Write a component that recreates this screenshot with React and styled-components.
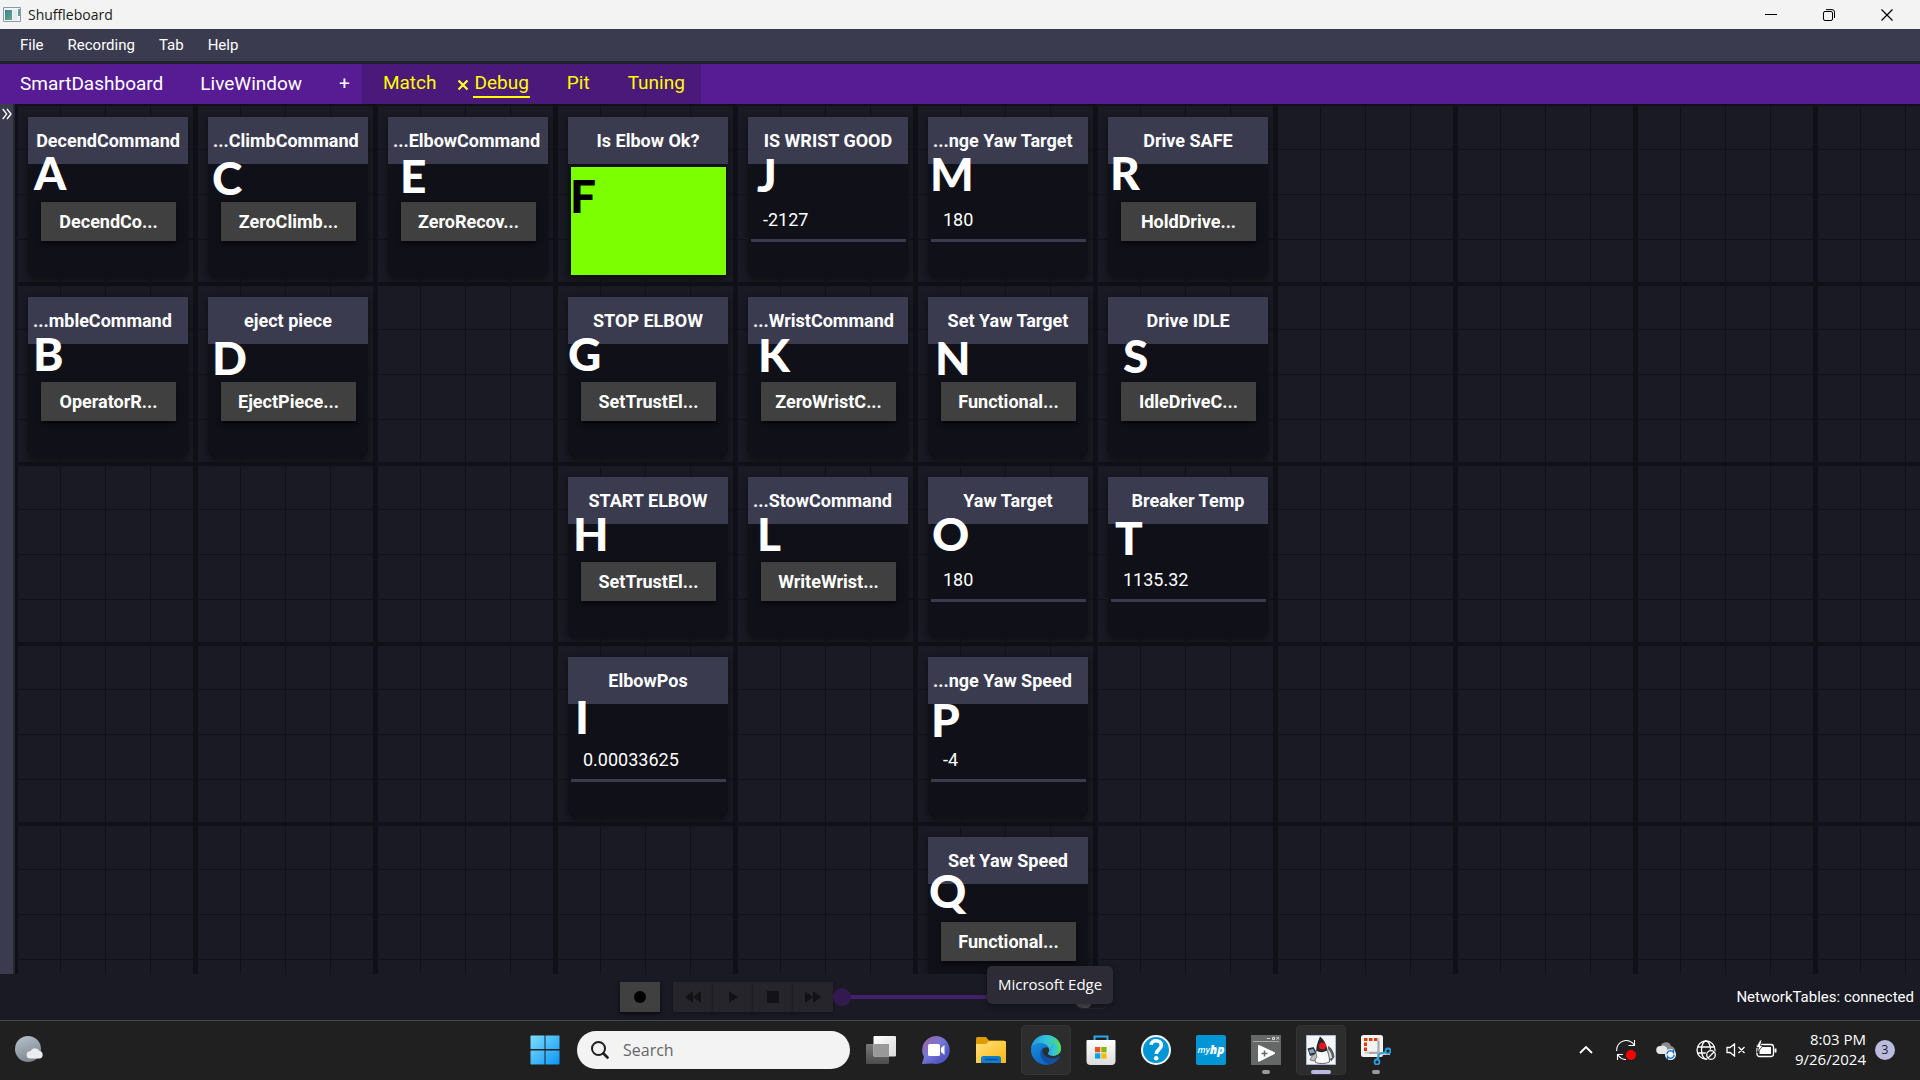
import React from "react";
import styled, { createGlobalStyle, css } from "styled-components";

const GlobalStyle = createGlobalStyle`
  * { box-sizing: border-box; }
  body { margin: 0; background: #1a1a25; overflow: hidden; }
  button, input { font: inherit; color: inherit; }
  button { border: 0; padding: 0; background: none; cursor: default; }
  svg { display: block; }
`;

const Screen = styled.div`
  display: flex;
  flex-direction: column;
  height: 100vh;
  font-family: Roboto, "Liberation Sans", sans-serif;
  color: #fff;
`;

/* ---------- window chrome ---------- */

const TitleBar = styled.header`
  display: flex;
  align-items: center;
  flex: none;
  height: 29px;
  padding-left: 3px;
  background: #f3f3f3;
  color: #1a1a1a;
`;

const WindowTitle = styled.h1`
  flex: 1;
  margin: 0 0 0 7px;
  font: 400 14px/20px "Open Sans", "Noto Sans", sans-serif;
`;

const WindowButton = styled.button`
  display: grid;
  place-items: center;
  width: 58px;
  height: 29px;
`;

const WindowButtons = styled.div`
  display: flex;
  padding-right: 4px;
`;

const MenuBar = styled.nav`
  display: flex;
  align-items: center;
  flex: none;
  gap: 24px;
  height: 35px;
  padding: 0 20px;
  background: #3b3b4f;
  border-bottom: 3px solid #22222e;
  font-size: 15px;
  line-height: 20px;
`;

const TabBar = styled.nav`
  display: flex;
  flex: none;
  height: 40px;
  background: #571c93;
  font-size: 19px;
  line-height: 24px;
`;

const Tab = styled.button`
  position: relative;
  height: 28px;
  padding: 0 1px;
  border-top: 2px solid transparent;
  border-bottom: 2px solid ${(p) => (p.$active ? "#ffff00" : "transparent")};
  line-height: 24px;
`;

const TabGroup = styled.div`
  display: flex;
  align-items: center;
  gap: ${(p) => (p.$custom ? 36 : 35)}px;
  padding: ${(p) => (p.$custom ? "0 15px 0 20px" : "0 11px 0 19px")};
  ${(p) =>
    p.$custom &&
    css`
      background: #4b1979;
      color: #ffff00;
      ${Tab} {
        line-height: 22px;
        padding-bottom: 2px;
      }
    `}
`;

const CloseMark = styled.span`
  position: absolute;
  right: 100%;
  top: 7px;
  margin-right: 4px;
`;

/* ---------- dashboard ---------- */

const Workspace = styled.main`
  display: flex;
  flex: 1;
  min-height: 0;
`;

const Drawer = styled.button`
  display: flex;
  justify-content: center;
  flex: none;
  width: 15px;
  padding-top: 4px;
  background: #3b3b4f;
  border-right: 2px solid #262632;
`;

const Canvas = styled.div`
  flex: 1;
  min-width: 0;
  overflow: hidden;
  display: grid;
  grid-template-columns: repeat(auto-fill, 160px);
  grid-auto-rows: 160px;
  gap: 20px;
  padding: 13px 0 0 13px;
  background-color: #1a1a25;
  background-image:
    linear-gradient(90deg, #101118 3px, transparent 3px, transparent 178px, #101118 178px),
    linear-gradient(#101118 2px, transparent 2px, transparent 178px, #101118 178px),
    linear-gradient(90deg, #111219 1px, transparent 1px),
    linear-gradient(#111219 1px, transparent 1px);
  background-size: 180px 180px, 180px 180px, 45px 45px, 45px 45px;
`;

const Tile = styled.section`
  position: relative;
  grid-column: ${(p) => p.$col};
  grid-row: ${(p) => p.$row};
  display: flex;
  flex-direction: column;
  border-radius: 0 0 8px 8px;
  background: #101018;
  box-shadow: 0 3px 6px 1px #101014;
`;

const TileTitle = styled.h2`
  display: flex;
  align-items: center;
  justify-content: ${(p) => (p.$clipped ? "flex-start" : "center")};
  flex: none;
  height: 47px;
  margin: 0;
  padding: 0 5px;
  background: #3b3b4f;
  font-size: 18px;
  font-weight: 700;
  line-height: 24px;
  white-space: nowrap;
`;

const TileBody = styled.div`
  display: flex;
  flex: 1;
  align-items: center;
  justify-content: center;
  padding: 2px 2px 0 3px;
`;

const CommandButton = styled.button`
  width: 135px;
  height: 39px;
  background: #404040;
  box-shadow: 0 3px 4px #00000099;
  font-size: 18px;
  font-weight: 700;
`;

const ValueField = styled.input`
  width: 100%;
  height: 41px;
  padding: 0 12px 2px;
  border: 0;
  border-bottom: 3px solid #3b3b4f;
  background: transparent;
  outline: 0;
  font-size: 18px;
`;

const BooleanBox = styled.div`
  align-self: stretch;
  flex: 1;
  margin: 1px 0 2px;
  background: #7cff00;
`;

const Mark = styled.span`
  position: absolute;
  left: ${(p) => p.$x}px;
  top: ${(p) => p.$y}px;
  color: ${(p) => (p.$dark ? "#000" : "#fff")};
  font: 900 46px/34px Lato, "Open Sans", sans-serif;
  pointer-events: none;
`;

/* ---------- playback bar ---------- */

const PlaybackBar = styled.footer`
  display: flex;
  align-items: center;
  flex: none;
  height: 46px;
  background: #1a1a25;
`;

const Playback = styled.div`
  flex: 1;
  display: flex;
  align-items: center;
  justify-content: center;
`;

const RecordButton = styled.button`
  display: grid;
  place-items: center;
  width: 40px;
  height: 30px;
  margin-right: 13px;
  background: #404040;
  box-shadow: 0 2px 4px #000000aa;
`;

const TransportButton = styled.button`
  display: grid;
  place-items: center;
  width: 40px;
  height: 30px;
  background: #25252b;
  box-shadow: 0 1px 3px #00000066;
`;

const Seek = styled.input`
  appearance: none;
  width: 232px;
  height: 18px;
  margin: 0 9px 0 0;
  background: linear-gradient(#42206b, #42206b) center / 100% 4px no-repeat;
  &::-webkit-slider-thumb {
    appearance: none;
    width: 18px;
    height: 18px;
    border-radius: 50%;
    background: #321a50;
  }
`;

const LoopSwitch = styled.input`
  appearance: none;
  width: 36px;
  height: 18px;
  margin: 6px 0 0;
  border-radius: 9px;
  border: 1px solid #25252d;
  background: radial-gradient(circle at 8px 8px, #4a4a50 9px, transparent 10px) #1b1b24;
`;

const ConnectionState = styled.p`
  margin: 0;
  padding: 0 6px;
  font-size: 15px;
  line-height: 20px;
`;

/* ---------- taskbar ---------- */

const Taskbar = styled.footer`
  display: grid;
  grid-template-columns: 1fr auto 1fr;
  align-items: center;
  flex: none;
  height: 60px;
  padding-bottom: 1px;
  background: #202020;
  border-top: 1px solid #484848;
  font-family: "Open Sans", "Noto Sans", sans-serif;
`;

const WeatherButton = styled.button`
  justify-self: start;
  margin-left: 13px;
`;

const Apps = styled.div`
  display: flex;
  align-items: center;
  gap: 5px;
  padding-left: 1px;
`;

const AppButton = styled.button`
  position: relative;
  display: grid;
  place-items: center;
  width: 50px;
  height: 50px;
  border-radius: 5px;
  ${(p) =>
    p.$lit &&
    css`
      background: #2d2d2d;
      box-shadow: inset 0 0 0 1px #343434;
    `}
  ${(p) =>
    p.$running &&
    css`
      &::after {
        content: "";
        position: absolute;
        bottom: 1px;
        width: ${p.$running === "active" ? 20 : 8}px;
        height: 4px;
        border-radius: 2px;
        background: ${p.$running === "active" ? "#b9bae0" : "#9a9a9a"};
      }
    `}
`;

const Tooltip = styled.span`
  position: absolute;
  left: -34px;
  bottom: calc(100% + 21px);
  height: 38px;
  padding: 0 11px;
  border-radius: 5px;
  background: #2c2b36;
  box-shadow: 0 2px 6px #00000066;
  font-size: 15px;
  line-height: 36px;
  white-space: nowrap;
`;

const SearchBox = styled.label`
  display: flex;
  align-items: center;
  gap: 14px;
  width: 273px;
  height: 38px;
  margin: 0 1px 0 2px;
  padding: 0 14px;
  border-radius: 19px;
  background: #f3f3f3;
`;

const SearchInput = styled.input`
  flex: 1;
  min-width: 0;
  padding: 0;
  border: 0;
  outline: 0;
  background: none;
  color: #1a1a1a;
  font-size: 16px;
  &::placeholder { color: #666; opacity: 1; }
`;

const Tray = styled.div`
  justify-self: end;
  display: flex;
  align-items: center;
  padding-right: 25px;
`;

const TrayButton = styled.button`
  display: grid;
  place-items: center;
  width: ${(p) => p.$w}px;
  height: 40px;
`;

const Clock = styled.time`
  width: 80px;
  padding-bottom: 2px;
  font-size: 15px;
  line-height: 20px;
  text-align: right;
`;

const Badge = styled.span`
  width: 20px;
  height: 20px;
  margin-left: 9px;
  border-radius: 50%;
  background: #bbbbe0;
  color: #1a1a1a;
  font-size: 12px;
  line-height: 19px;
  text-align: center;
`;

/* ---------- drawings ---------- */

const AppGlyph = () => (
  <svg width="18" height="18" viewBox="0 0 18 18">
    <path d="M.5 1.5h17v14H.5z" fill="#f2f6f8" stroke="#8d99a3" />
    <defs>
      <linearGradient id="glyph" x2="1" y2="1">
        <stop stopColor="#3a7f9b" />
        <stop offset="1" stopColor="#62ab7c" />
      </linearGradient>
    </defs>
    <path d="M2 4h7v10H2z" fill="url(#glyph)" />
    <path d="M15 3h2v7h-2z" fill="#5f9f9a" />
    <path d="M10 4h4v10h-4z" fill="#e4e9ed" />
  </svg>
);

const MinimizeIcon = () => (
  <svg width="12" height="12" viewBox="0 0 12 12"><path d="M0 5.5h12" stroke="#000" /></svg>
);
const RestoreIcon = () => (
  <svg width="12" height="12" viewBox="0 0 12 12" fill="none" stroke="#000">
    <rect x=".5" y="2.5" width="9" height="9" rx="1.5" />
    <path d="M3 .6h6a2.5 2.5 0 0 1 2.5 2.5V9" />
  </svg>
);
const CloseIcon = () => (
  <svg width="12" height="12" viewBox="0 0 12 12"><path d="M.5.5l11 11M11.5.5l-11 11" stroke="#000" strokeWidth="1.2" /></svg>
);
const TabCloseIcon = () => (
  <svg width="12" height="12" viewBox="0 0 12 12"><path d="M1.500 1.500l9 9M10.500 1.500l-9 9" stroke="#ffff30" strokeWidth="2.200" /></svg>
);
const ExpandIcon = () => (
  <svg width="10" height="12" viewBox="0 0 10 12" fill="none" stroke="#fff" strokeWidth="1.3">
    <path d="M.7 1l4 5-4 5M5 1l4 5-4 5" />
  </svg>
);

const TransportIcon = ({ kind }) => (
  <svg width="18" height="14" viewBox="0 0 18 14" fill="#131317">
    {kind === "back" && <path d="M9 1v12L1 7zM17 1v12L9 7z" />}
    {kind === "play" && <path d="M5 1v12l9-6z" />}
    {kind === "stop" && <path d="M3 1h12v12H3z" />}
    {kind === "next" && <path d="M1 1v12l8-6zM9 1v12l8-6z" />}
  </svg>
);

const WeatherIcon = () => (
  <svg width="32" height="32" viewBox="0 0 32 32">
    <defs>
      <linearGradient id="moon" x2=".4" y2="1">
        <stop stopColor="#b9c3ce" />
        <stop offset="1" stopColor="#7f8991" />
      </linearGradient>
    </defs>
    <circle cx="15" cy="15" r="13" fill="url(#moon)" />
    <path d="M17 24.500a3.600 3.600 0 0 1 .4-7.200 5 5 0 0 1 9-.5 4 4 0 0 1 .6 7.700z" fill="#e9edf0" />
  </svg>
);

const WindowsIcon = () => (
  <svg width="30" height="30" viewBox="0 0 30 30">
    <defs>
      <linearGradient id="win" gradientUnits="userSpaceOnUse" x2="30" y2="30">
        <stop stopColor="#7fe0ff" />
        <stop offset="1" stopColor="#0a94f5" />
      </linearGradient>
    </defs>
    <path d="M1 .5h13.500V14H.5V1zM15.500.5H29l.5.500V14h-14zM.5 15.500h14v14H1L.5 29zM15.500 15.500h14V29l-.5.500H15.500z" fill="url(#win)" />
  </svg>
);

const SearchIcon = () => (
  <svg width="18" height="18" viewBox="0 0 18 18" fill="none" stroke="#1f1f1f" strokeLinecap="round">
    <circle cx="7.500" cy="7.500" r="6.500" strokeWidth="2" />
    <path d="M12.500 12.500l4 4" strokeWidth="2.600" />
  </svg>
);

const TaskViewIcon = () => (
  <svg width="30" height="30" viewBox="0 0 30 30">
    <defs>
      <linearGradient id="tv" x2="1" y2="1"><stop stopColor="#fff" /><stop offset="1" stopColor="#d9d9d9" /></linearGradient>
      <linearGradient id="tvb" x2="0" y2="1"><stop stopColor="#777" /><stop offset="1" stopColor="#4c4c4c" /></linearGradient>
    </defs>
    <rect x="0" y="9" width="23" height="20" rx="1" fill="url(#tvb)" />
    <rect x="7.500" y="1" width="22.500" height="20.500" rx="1" fill="url(#tv)" />
    <path d="M7.500 9H23v12.500H7.500z" fill="#999" />
  </svg>
);

const ChatIcon = () => (
  <svg width="30" height="30" viewBox="0 0 30 30">
    <defs>
      <linearGradient id="chat" x1=".1" y1=".2" x2=".7" y2=".8">
        <stop stopColor="#9567ae" /><stop offset=".5" stopColor="#7477d6" /><stop offset="1" stopColor="#5558c4" />
      </linearGradient>
    </defs>
    <path d="M15 1a14 14 0 1 1-4 27.500L1 29l2-7A14 14 0 0 1 15 1z" fill="url(#chat)" />
    <rect x="7" y="9" width="12" height="12" rx="1.500" fill="#fff" />
    <path d="M20 13l3.500-3v10L20 17z" fill="#fff" />
  </svg>
);

const FolderIcon = () => (
  <svg width="30" height="30" viewBox="0 0 30 30">
    <defs>
      <linearGradient id="fold" x2="1" y2="1"><stop stopColor="#ffe07a" /><stop offset="1" stopColor="#fdb813" /></linearGradient>
    </defs>
    <path d="M0 3.500A1.500 1.500 0 0 1 1.500 2H10l3 3.500h15V12H0z" fill="#e09a05" />
    <path d="M0 9h10l3-3h16a1 1 0 0 1 1 1v21H0z" fill="url(#fold)" />
    <path d="M5 28v-4.500A2.500 2.500 0 0 1 7.500 21h15a2.500 2.500 0 0 1 2.500 2.500V28z" fill="#0f7dce" />
    <path d="M9 24.500h13" stroke="#0a5292" strokeWidth="1.500" />
  </svg>
);

const EdgeIcon = () => (
  <svg width="30" height="30" viewBox="0 0 30 30">
    <defs>
      <linearGradient id="edgeTop" x1="0" y1=".4" x2="1" y2=".6">
        <stop stopColor="#1f9be0" /><stop offset=".45" stopColor="#35c3dc" /><stop offset=".75" stopColor="#3fd29a" /><stop offset="1" stopColor="#6ee046" />
      </linearGradient>
      <linearGradient id="edgeLow" x2=".5" y2="1">
        <stop stopColor="#1c9be2" /><stop offset="1" stopColor="#0c63c4" />
      </linearGradient>
    </defs>
    <circle cx="15" cy="15" r="15" fill="url(#edgeLow)" />
    <path d="M.2 13C1.500 5 7.500 0 15 0c8.500 0 15 6 15 12.800 0 5-3.600 8-7.700 8-3.400 0-5.300-1-5.300-2.200 0-.8 1.300-1.400 1.300-3.800C18.300 10.600 14 8 9.500 8 5 8 1.500 10 .2 13z" fill="url(#edgeTop)" />
    <path d="M12 12.500C9.700 14 9 17 9.600 20c1 5 5.600 9.300 10.400 9.200a15 15 0 0 0 8-6.200c.5-.8-.2-1.300-1-.9-7 3.300-14.500.4-14.800-5.300-.1-1.600.3-3 1.300-4z" fill="#124f9e" />
    <path d="M13.500 12.800c-1.500.9-2 2.500-1.600 4.300.5 3.600 4.800 6.500 9.400 6.300 3-.1 5.200-.8 7.700-2.400L30 16l-2 2.500c-2 1.800-3.800 2.300-5.700 2.300-3.400 0-5.300-1-5.300-2.200 0-.8 1.300-1.400 1.300-3.400 0-2-2.600-4-4.800-2.400z" fill="#2a2d30" />
    <path d="M30 12.800c0 5-3.600 8-7.700 8-3.400 0-5.300-1-5.300-2.200 0-.8 1.300-1.400 1.300-3.800L22 8z" fill="url(#edgeTop)" />
    <path d="M28.500 20.500L32 15v8z" fill="#2d2d2d" />
  </svg>
);

const StoreIcon = () => (
  <svg width="30" height="30" viewBox="0 0 30 30">
    <path d="M8.500 6V1.500h13V6" fill="none" stroke="#27a9ee" strokeWidth="2" />
    <defs><linearGradient id="store" x2="0" y2="1"><stop stopColor="#fff" /><stop offset="1" stopColor="#dcdcdc" /></linearGradient></defs>
    <path d="M.5 6a1 1 0 0 1 1-1h27a1 1 0 0 1 1 1v20a4 4 0 0 1-4 4h-21a4 4 0 0 1-4-4z" fill="url(#store)" />
    <path d="M9 12h5.300v5.300H9z" fill="#f25022" /><path d="M15.300 12h5.300v5.300h-5.300z" fill="#7fba00" />
    <path d="M9 18.300h5.300v5.300H9z" fill="#00a4ef" /><path d="M15.300 18.300h5.300v5.300h-5.300z" fill="#ffb900" />
  </svg>
);

const HelpIcon = () => (
  <svg width="30" height="30" viewBox="0 0 30 30" fill="none">
    <circle cx="15" cy="15" r="14" fill="#0096d6" stroke="#f4f8fa" strokeWidth="2" />
    <path d="M10 9.800C10.500 7 12.500 5.700 15 5.700c3 0 5.300 1.700 5.300 4.600 0 4-5 4.200-5 8.700" stroke="#fff" strokeWidth="3.600" />
    <circle cx="15.200" cy="23.300" r="2.300" fill="#fff" />
  </svg>
);

const HpTile = styled.span`
  display: flex;
  align-items: center;
  justify-content: center;
  width: 30px;
  height: 30px;
  border-radius: 2px;
  background: #0096d6;
  font: italic 600 9px/30px "Open Sans", sans-serif;
  b { font-size: 12px; }
`;

const ServiceIcon = () => (
  <svg width="30" height="30" viewBox="0 0 30 30">
    <path d="M0 0h30v30H0z" fill="#666867" />
    <path d="M2 6.500h26" stroke="#a9a9a9" />
    <path d="M16 3.500h3M21.500 2.500h2v2h-2zM25.500 2l2.500 2.500M28 2l-2.500 2.500" stroke="#ddd" fill="none" />
    <path d="M7 11a1 1 0 0 1 1.500-.8l15 7a1 1 0 0 1 0 1.800l-15 7.500A1 1 0 0 1 7 25.500z" fill="#fff" />
    <path d="M13.500 15.500v6M10.500 18.500h6" stroke="#666867" strokeWidth="1.500" />
  </svg>
);

const DukeIcon = () => (
  <svg width="30" height="30" viewBox="0 0 30 30">
    <path d="M.5.5h29v29H.5z" fill="#f3f5f8" stroke="#a9bcd6" />
    <path d="M1.500 13.500l6-1.500 4 7-7.500 2z" fill="#2f3135" />
    <path d="M3 15l4-1 2 3.500-5 1z" fill="#7fa4cf" />
    <path d="M22 11c3 1 6 6 6.500 11l-3 4-3-2z" fill="#5a5b5f" />
    <path d="M22 14c2 2 4 5 4 9l-3 1z" fill="#d9dadc" />
    <path d="M12 13c-3 4-3.500 10-2.500 14.500 4 1.500 10 1.500 14-.5 0-5-1-10-4-14.500z" fill="#fafafa" stroke="#444" strokeWidth=".8" />
    <path d="M14 1.500c-1.500 4-4 9-3.500 14 3 2.500 8 2 11-.5C20.500 9.500 18 4.500 14 1.500z" fill="#27282b" />
    <path d="M10 18l-4 3-2 4 4 1 3-4z" fill="#bdbdbd" stroke="#444" strokeWidth=".6" />
    <circle cx="16.500" cy="11" r="3.500" fill="#e8141c" />
  </svg>
);

const SnipIcon = () => (
  <svg width="30" height="30" viewBox="0 0 30 30" fill="none">
    <rect x="0" y="0" width="22" height="22" rx="2.500" fill="#f3f3f3" />
    <path d="M4.500 16V4.500H17" stroke="#d83b01" strokeWidth="3" strokeDasharray="3.500 1.500" />
    <path d="M17.500 3v16H29M17.500 17.500h-14" stroke="#c9c9c9" strokeWidth="2" />
    <path d="M17.500 6v12l-1 6M8 18h17" stroke="#a5adb3" strokeWidth="2" />
    <circle cx="27" cy="16" r="2.500" stroke="#2a9fe0" strokeWidth="1.800" />
    <circle cx="16" cy="27" r="2.500" stroke="#2a9fe0" strokeWidth="1.800" />
    <path d="M24.500 17L18 19M17 24.500L18 19" stroke="#2a9fe0" strokeWidth="1.800" />
  </svg>
);

const ChevronUp = () => (
  <svg width="14" height="8" viewBox="0 0 14 8" fill="none"><path d="M1 7l6-6 6 6" stroke="#fff" strokeWidth="1.800" /></svg>
);
const SyncIcon = () => (
  <svg width="20" height="20" viewBox="0 0 20 20" fill="none" stroke="#fff" strokeWidth="1.100">
    <path d="M.7 11A9.500 9.500 0 0 1 18.500 5.500M18.500 0v5.500h-6M1.500 20v-5.500H7M2 15c2 3 5 4.500 8 4.500" />
    <circle cx="15" cy="15" r="5" fill="#f00" stroke="none" />
  </svg>
);
const CloudIcon = () => (
  <svg width="20" height="20" viewBox="0 0 20 20" fill="none">
    <path d="M5 5a5.500 5.500 0 0 1 10 1 5 5 0 0 1 4 6l-8 1z" fill="#8b8b8b" />
    <path d="M4 14a4 4 0 0 1 .5-8 5 5 0 0 1 7 3l-2 5z" fill="#e6e6e6" />
    <circle cx="14.500" cy="14.500" r="5.500" fill="#f3f6fa" />
    <path d="M11 14a3.500 3.500 0 0 1 6.500-1.500V10M18 15a3.500 3.500 0 0 1-6.500 1.500V19" stroke="#1173cc" strokeWidth="1.400" />
  </svg>
);
const GlobeIcon = () => (
  <svg width="20" height="20" viewBox="0 0 20 20" fill="none" stroke="#fff" strokeWidth="1.300">
    <circle cx="10" cy="10" r="9" />
    <ellipse cx="10" cy="10" rx="4.500" ry="9" />
    <path d="M1.500 7h17M1.500 13h17" />
    <circle cx="15" cy="15" r="5.600" fill="#202020" stroke="none" />
    <circle cx="15" cy="15" r="4.300" /><path d="M12 18l6-6" />
  </svg>
);
const MutedIcon = () => (
  <svg width="20" height="14" viewBox="0 0 20 14" fill="none" stroke="#fff" strokeWidth="1.300">
    <path d="M1 4.500h3L8.500 1v12L4 9.500H1zM12.500 4l6 6M18.500 4l-6 6" />
  </svg>
);
const BatteryIcon = () => (
  <svg width="22" height="20" viewBox="0 0 22 20" fill="none" stroke="#fff" strokeWidth="1.300">
    <rect x="2" y="4.500" width="16.500" height="12" rx="2.500" />
    <path d="M4.500 7H16v7H4.500z" fill="#fff" stroke="none" /><path d="M20.500 8.500v4" strokeWidth="2" />
    <path d="M5 0L1 7.500h2.500L2 13l6-7.500H5.500L7 0z" fill="#fff" stroke="#202020" strokeWidth=".8" />
  </svg>
);

/* ---------- data ---------- */

const tiles = [
  { col: 1, row: 1, title: "DecendCommand", command: "DecendCo...", mark: ["A", 6, 39] },
  { col: 1, row: 2, title: "...mbleCommand", clipped: true, command: "OperatorR...", mark: ["B", 5, 40] },
  { col: 2, row: 1, title: "...ClimbCommand", clipped: true, command: "ZeroClimb...", mark: ["C", 4, 44] },
  { col: 2, row: 2, title: "eject piece", command: "EjectPiece...", mark: ["D", 4, 44] },
  { col: 3, row: 1, title: "...ElbowCommand", clipped: true, command: "ZeroRecov...", mark: ["E", 12, 42] },
  { col: 4, row: 1, title: "Is Elbow Ok?", flag: true, mark: ["F", 2, 62] },
  { col: 4, row: 2, title: "STOP ELBOW", command: "SetTrustEl...", mark: ["G", 0, 40] },
  { col: 4, row: 3, title: "START ELBOW", command: "SetTrustEl...", mark: ["H", 5, 40] },
  { col: 4, row: 4, title: "ElbowPos", value: "0.00033625", mark: ["I", 7, 43] },
  { col: 5, row: 1, title: "IS WRIST GOOD", value: "-2127", mark: ["J", 9, 41] },
  { col: 5, row: 2, title: "...WristCommand", clipped: true, command: "ZeroWristC...", mark: ["K", 10, 41] },
  { col: 5, row: 3, title: "...StowCommand", clipped: true, command: "WriteWrist...", mark: ["L", 9, 40] },
  { col: 6, row: 1, title: "...nge Yaw Target", clipped: true, value: "180", mark: ["M", 2, 40] },
  { col: 6, row: 2, title: "Set Yaw Target", command: "Functional...", mark: ["N", 7, 44] },
  { col: 6, row: 3, title: "Yaw Target", value: "180", mark: ["O", 4, 40] },
  { col: 6, row: 4, title: "...nge Yaw Speed", clipped: true, value: "-4", mark: ["P", 3, 46] },
  { col: 6, row: 5, title: "Set Yaw Speed", command: "Functional...", mark: ["Q", 1, 37] },
  { col: 7, row: 1, title: "Drive SAFE", command: "HoldDrive...", mark: ["R", 2, 39] },
  { col: 7, row: 2, title: "Drive IDLE", command: "IdleDriveC...", mark: ["S", 15, 42] },
  { col: 7, row: 3, title: "Breaker Temp", value: "1135.32", mark: ["T", 7, 44] },
];

function Widget({ col, row, title, clipped, command, value, flag, mark }) {
  const [letter, x, y] = mark;
  return (
    <Tile $col={col} $row={row}>
      <TileTitle $clipped={clipped}>{title}</TileTitle>
      <TileBody>
        {command && <CommandButton type="button">{command}</CommandButton>}
        {value && <ValueField aria-label={title} defaultValue={value} />}
        {flag && <BooleanBox />}
      </TileBody>
      <Mark $x={x} $y={y} $dark={flag}>{letter}</Mark>
    </Tile>
  );
}

export default function App() {
  return (
    <Screen>
      <GlobalStyle />
      <TitleBar>
        <AppGlyph />
        <WindowTitle>Shuffleboard</WindowTitle>
        <WindowButtons>
          <WindowButton aria-label="Minimize"><MinimizeIcon /></WindowButton>
          <WindowButton aria-label="Restore"><RestoreIcon /></WindowButton>
          <WindowButton aria-label="Close"><CloseIcon /></WindowButton>
        </WindowButtons>
      </TitleBar>

      <MenuBar>
        {["File", "Recording", "Tab", "Help"].map((m) => <button key={m} type="button">{m}</button>)}
      </MenuBar>

      <TabBar>
        <TabGroup>
          <Tab>SmartDashboard</Tab>
          <Tab>LiveWindow</Tab>
          <Tab>+</Tab>
        </TabGroup>
        <TabGroup $custom>
          <Tab>Match</Tab>
          <Tab $active>
            <CloseMark><TabCloseIcon /></CloseMark>
            Debug
          </Tab>
          <Tab>Pit</Tab>
          <Tab>Tuning</Tab>
        </TabGroup>
      </TabBar>

      <Workspace>
        <Drawer aria-label="Open the drawer"><ExpandIcon /></Drawer>
        <Canvas>
          {tiles.map((t) => <Widget key={t.mark[0]} {...t} />)}
        </Canvas>
      </Workspace>

      <PlaybackBar>
        <Playback>
          <RecordButton aria-label="Record">
            <svg width="14" height="14" viewBox="0 0 14 14"><circle cx="7" cy="7" r="6" /></svg>
          </RecordButton>
          {["back", "play", "stop", "next"].map((k) => (
            <TransportButton key={k} aria-label={k}><TransportIcon kind={k} /></TransportButton>
          ))}
          <Seek type="range" min="0" max="100" defaultValue="0" aria-label="Position" />
          <LoopSwitch type="checkbox" aria-label="Loop" />
        </Playback>
        <ConnectionState>NetworkTables: connected</ConnectionState>
      </PlaybackBar>

      <Taskbar>
        <WeatherButton aria-label="Weather"><WeatherIcon /></WeatherButton>
        <Apps>
          <AppButton aria-label="Start"><WindowsIcon /></AppButton>
          <SearchBox>
            <SearchIcon />
            <SearchInput type="text" placeholder="Search" aria-label="Search" />
          </SearchBox>
          <AppButton aria-label="Task view"><TaskViewIcon /></AppButton>
          <AppButton aria-label="Chat"><ChatIcon /></AppButton>
          <AppButton aria-label="File Explorer"><FolderIcon /></AppButton>
          <AppButton $lit>
            <EdgeIcon />
            <Tooltip role="tooltip">Microsoft Edge</Tooltip>
          </AppButton>
          <AppButton aria-label="Microsoft Store"><StoreIcon /></AppButton>
          <AppButton aria-label="Help"><HelpIcon /></AppButton>
          <AppButton><HpTile>my<b>hp</b></HpTile></AppButton>
          <AppButton aria-label="Driver station" $running="idle"><ServiceIcon /></AppButton>
          <AppButton aria-label="Java" $lit $running="active"><DukeIcon /></AppButton>
          <AppButton aria-label="Snipping Tool" $running="idle"><SnipIcon /></AppButton>
        </Apps>
        <Tray>
          <TrayButton $w={40} aria-label="Hidden icons"><ChevronUp /></TrayButton>
          <TrayButton $w={40} aria-label="Updates"><SyncIcon /></TrayButton>
          <TrayButton $w={40} aria-label="OneDrive"><CloudIcon /></TrayButton>
          <TrayButton $w={40} aria-label="Network"><GlobeIcon /></TrayButton>
          <TrayButton $w={20} aria-label="Volume"><MutedIcon /></TrayButton>
          <TrayButton $w={40} aria-label="Battery"><BatteryIcon /></TrayButton>
          <Clock>8:03 PM<br />9/26/2024</Clock>
          <Badge>3</Badge>
        </Tray>
      </Taskbar>
    </Screen>
  );
}
